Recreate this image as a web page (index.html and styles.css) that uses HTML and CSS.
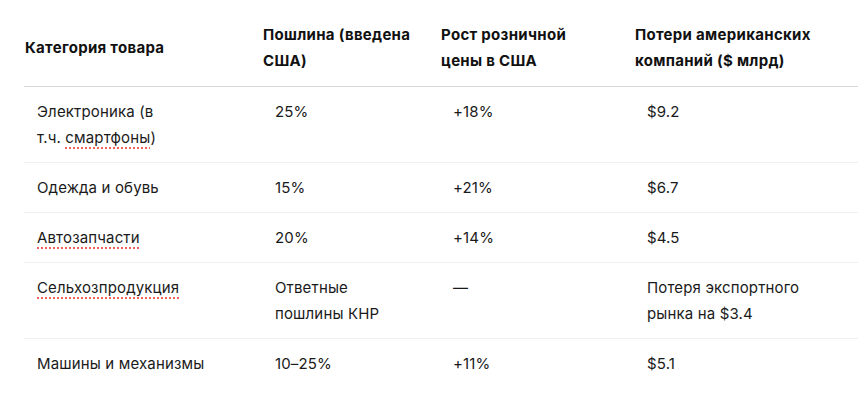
FILE: index.html
```html
<!DOCTYPE html>
<html lang="ru">
<head>
<meta charset="utf-8">
<link rel="stylesheet" href="styles.css">
</head>
<body>
<div class="wrap">
<table class="tariffs">
  <colgroup>
    <col class="c1"><col class="c2"><col class="c3"><col class="c4">
  </colgroup>
  <thead>
    <tr>
      <th>Категория товара</th>
      <th>Пошлина (введена<br>США)</th>
      <th>Рост розничной<br>цены в США</th>
      <th>Потери американских<br>компаний ($ млрд)</th>
    </tr>
  </thead>
  <tbody>
    <tr>
      <td>Электроника (в<br>т.ч. <span class="sp">смартфоны</span>)</td>
      <td>25%</td>
      <td>+18%</td>
      <td>$9.2</td>
    </tr>
    <tr>
      <td>Одежда и обувь</td>
      <td>15%</td>
      <td>+21%</td>
      <td>$6.7</td>
    </tr>
    <tr>
      <td><span class="sp">Автозапчасти</span></td>
      <td>20%</td>
      <td>+14%</td>
      <td>$4.5</td>
    </tr>
    <tr>
      <td><span class="sp">Сельхозпродукция</span></td>
      <td>Ответные<br>пошлины КНР</td>
      <td>—</td>
      <td>Потеря экспортного<br>рынка на $3.4</td>
    </tr>
    <tr>
      <td>Машины и механизмы</td>
      <td>10–25%</td>
      <td>+11%</td>
      <td>$5.1</td>
    </tr>
  </tbody>
</table>
</div>
</body>
</html>
```
FILE: styles.css
```css
html, body {
  margin: 0;
  padding: 0;
  background: #ffffff;
}
body {
  font-family: Inter, "Noto Sans", "Liberation Sans", sans-serif;
  font-size: 15px;
  line-height: 26px;
  letter-spacing: 0.15px;
  color: #1a1a1a;
  overflow: hidden;
}
.wrap {
  padding: 10px 0 0 24px;
}
.tariffs {
  border-collapse: collapse;
  table-layout: fixed;
  width: 834px;
}
.c1 { width: 238px; }
.c2 { width: 178px; }
.c3 { width: 194px; }
.c4 { width: 224px; }
.tariffs th {
  text-align: left;
  font-weight: 700;
  letter-spacing: 0.3px;
  color: #111111;
  padding: 12px 8px 12px 1px;
  vertical-align: middle;
  white-space: nowrap;
  border-bottom: 1px solid #d6d6d6;
}
.tariffs td {
  padding: 12px 8px 11px 13px;
  vertical-align: top;
  white-space: nowrap;
  border-bottom: 1px solid #efefef;
}
.tariffs tbody tr:last-child td {
  border-bottom: none;
}
.sp {
  text-decoration: underline dotted #f0625a;
  text-decoration-thickness: 2px;
  text-underline-offset: 4px;
}
```
